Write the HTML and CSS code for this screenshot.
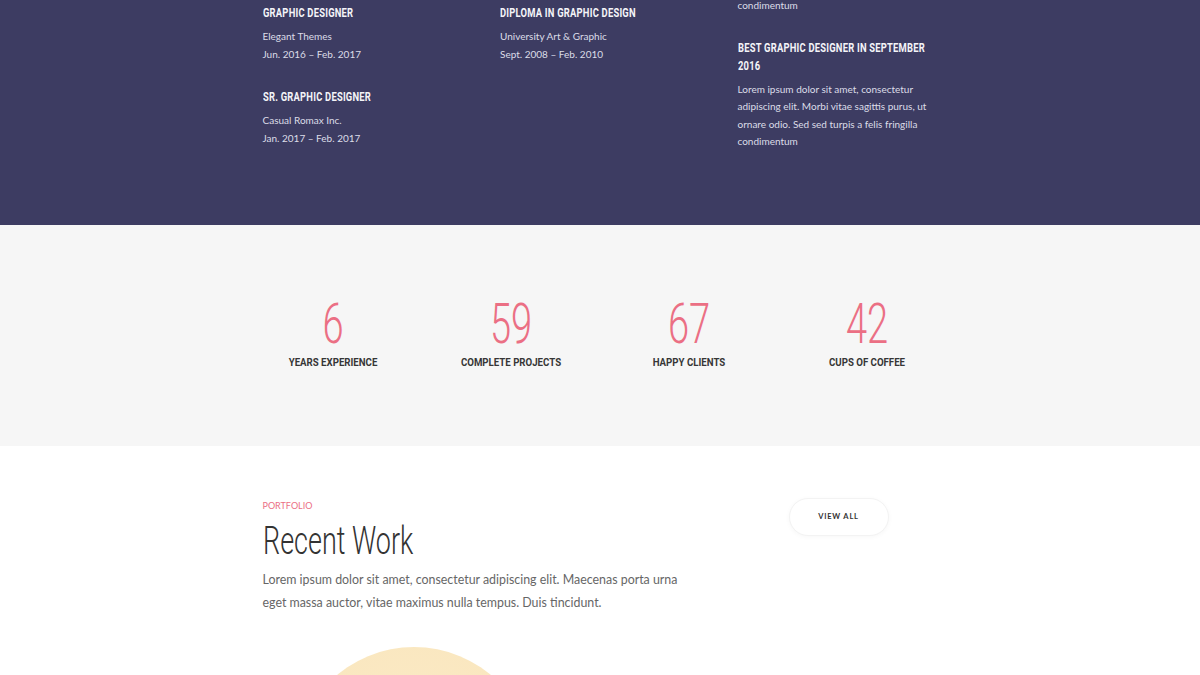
FILE: index.html
```html
<!DOCTYPE html>
<html lang="en">
<head>
<meta charset="utf-8">
<title>Resume</title>
<link rel="stylesheet" href="styles.css">
</head>
<body>
<section class="resume">
  <div class="wrap resume-grid">
    <div class="col">
      <div class="item">
        <h3 class="item-title">Graphic Designer</h3>
        <p class="item-text">Elegant Themes<br>Jun. 2016 – Feb. 2017</p>
      </div>
      <div class="item">
        <h3 class="item-title">Sr. Graphic Designer</h3>
        <p class="item-text">Casual Romax Inc.<br>Jan. 2017 – Feb. 2017</p>
      </div>
    </div>
    <div class="col">
      <div class="item">
        <h3 class="item-title">Diploma in Graphic Design</h3>
        <p class="item-text">University Art &amp; Graphic<br>Sept. 2008 – Feb. 2010</p>
      </div>
    </div>
    <div class="col col-awards">
      <p class="item-text tail">condimentum</p>
      <div class="item">
        <h3 class="item-title">Best Graphic Designer in September 2016</h3>
        <p class="item-text">Lorem ipsum dolor sit amet, consectetur adipiscing elit. Morbi vitae sagittis purus, ut ornare odio. Sed sed turpis a felis fringilla condimentum</p>
      </div>
    </div>
  </div>
</section>

<section class="stats">
  <div class="stats-grid">
    <div class="stat"><div class="stat-num">6</div><div class="stat-label">Years Experience</div></div>
    <div class="stat"><div class="stat-num">59</div><div class="stat-label">Complete Projects</div></div>
    <div class="stat"><div class="stat-num">67</div><div class="stat-label">Happy Clients</div></div>
    <div class="stat"><div class="stat-num">42</div><div class="stat-label">Cups of Coffee</div></div>
  </div>
</section>

<section class="portfolio">
  <div class="wrap">
    <div class="port-head">
      <div class="port-intro">
        <div class="eyebrow">Portfolio</div>
        <h2 class="port-title">Recent Work</h2>
        <p class="port-text">Lorem ipsum dolor sit amet, consectetur adipiscing elit. Maecenas porta urna eget massa auctor, vitae maximus nulla tempus. Duis tincidunt.</p>
      </div>
      <div class="port-action">
        <a class="btn" href="#">View All</a>
      </div>
    </div>
    <div class="port-grid">
      <div class="work"><div class="blob"></div></div>
      <div class="work"></div>
    </div>
  </div>
</section>
</body>
</html>
```

FILE: styles.css
```css
* { box-sizing: border-box; }
html, body { margin: 0; padding: 0; }
body {
  font-family: Lato, "Open Sans", sans-serif;
  background: #ffffff;
  overflow: hidden;
}
.wrap {
  width: 675px;
  margin: 0 auto;
}

/* Resume (dark) */
.resume {
  background: #3d3c62;
  height: 225px;
  overflow: hidden;
}
.resume-grid {
  display: grid;
  grid-template-columns: repeat(3, 200px);
  column-gap: 37.5px;
  padding-top: 4px;
}
.item { margin-bottom: 25px; }
.item-title {
  margin: 0 0 6px;
  width: calc(100% / 0.75);
  transform: scaleX(0.75);
  transform-origin: 0 0;
  font-family: Roboto, "DejaVu Sans", sans-serif;
  font-weight: 700;
  font-size: 12.5px;
  line-height: 18px;
  text-transform: uppercase;
  color: #f4f4f8;
  letter-spacing: 0.3px;
}
.item-text {
  margin: 0;
  font-size: 10px;
  line-height: 17.6px;
  color: #dcdce8;
}
.col-awards .item-text { width: 195px; }
.tail { margin-top: -7px !important; margin-bottom: 24px !important; }
.col-awards .item-title { margin-bottom: 6px; }

/* Stats */
.stats {
  background: #f6f6f6;
  height: 221px;
  padding-top: 71px;
}
.stats-grid {
  width: 712px;
  margin: 0 auto;
  display: grid;
  grid-template-columns: repeat(4, 1fr);
}
.stat { text-align: center; }
.stat-num {
  font-family: Roboto, sans-serif;
  font-weight: 300;
  font-size: 56px;
  line-height: 56px;
  transform: scaleX(0.68);
  color: #eb6f84;
}
.stat-label {
  margin-top: 3px;
  font-family: Roboto, sans-serif;
  font-weight: 700;
  font-size: 11.3px;
  line-height: 16px;
  transform: scaleX(0.855);
  text-transform: uppercase;
  color: #363636;
}

/* Portfolio */
.portfolio { padding-top: 53px; }
.port-head {
  display: grid;
  grid-template-columns: 1fr 149px;
}
.eyebrow {
  font-size: 9px;
  line-height: 14px;
  text-transform: uppercase;
  color: #eb6f84;
}
.port-title {
  margin: 6px 0 0;
  width: calc(100% / 0.71);
  transform: scaleX(0.71);
  transform-origin: 0 0;
  font-family: Roboto, sans-serif;
  font-weight: 300;
  font-size: 38px;
  line-height: 44px;
  color: #333333;
}
.port-text {
  margin: 5px 0 0;
  width: 440px;
  font-size: 12.4px;
  line-height: 23px;
  color: #666666;
}
.btn {
  display: inline-block;
  width: 100px;
  height: 38px;
  margin-top: -1px;
  line-height: 36px;
  border-radius: 19px;
  background: #fff;
  border: 1px solid #f3f3f3;
  box-shadow: 0 1px 5px rgba(0,0,0,0.035);
  text-align: center;
  text-decoration: none;
  text-transform: uppercase;
  font-size: 7.5px;
  font-weight: 700;
  letter-spacing: 0.8px;
  color: #333;
}
.port-grid {
  margin-top: 33px;
  display: grid;
  grid-template-columns: 302px 302px;
  column-gap: 70px;
}
.work { height: 240px; display: flex; justify-content: center; }
.blob {
  width: 240px;
  height: 240px;
  border-radius: 50%;
  background: radial-gradient(circle at 50% 40%, #fbeac6 0%, #f9e5bb 100%);
}
```
